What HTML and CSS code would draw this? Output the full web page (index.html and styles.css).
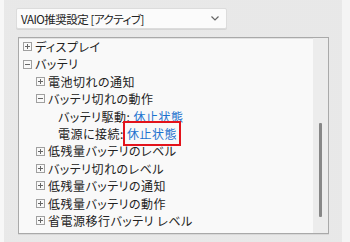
FILE: index.html
```html
<!DOCTYPE html>
<html lang="ja">
<head>
    <meta charset="UTF-8">
    <meta name="viewport" content="width=device-width, initial-scale=1.0">
    <title>電源オプション</title>
    <link rel="stylesheet" href="styles.css">
</head>
<body>
    <div class="edge-left"></div>
    <div class="panel">
        <!-- プラン選択 -->
        <div class="plan-select">
            <span class="plan-name">VAIO推奨設定 [アクティブ]</span>
            <svg class="chevron" width="8" height="5" viewBox="0 0 8 5"><path d="M0.5 0.5 L4 4 L7.5 0.5" fill="none" stroke="#666" stroke-width="1.2"/></svg>
        </div>

        <!-- 設定ツリー -->
        <div class="tree-box">
            <div class="tree">
                <div class="row level-1"><span class="toggle"></span>ディスプレイ</div>
                <div class="row level-1"><span class="toggle open"></span>バッテリ</div>
                <div class="row level-2"><span class="toggle"></span>電池切れの通知</div>
                <div class="row level-2"><span class="toggle open"></span>バッテリ切れの動作</div>
                <div class="row level-3">バッテリ駆動: <a class="value">休止状態</a></div>
                <div class="row level-3">電源に接続: <a class="value marked">休止状態</a></div>
                <div class="row level-2"><span class="toggle"></span>低残量バッテリのレベル</div>
                <div class="row level-2"><span class="toggle"></span>バッテリ切れのレベル</div>
                <div class="row level-2"><span class="toggle"></span>低残量バッテリの通知</div>
                <div class="row level-2"><span class="toggle"></span>低残量バッテリの動作</div>
                <div class="row level-2"><span class="toggle"></span>省電源移行バッテリ レベル</div>
            </div>
            <div class="scrollbar"><div class="thumb"></div></div>
        </div>
    </div>
    <div class="edge-right"></div>
</body>
</html>
```

FILE: styles.css
```css
html, body {
    height: 100%;
}
body {
    margin: 0;
    display: flex;
    font-family: "Noto Sans CJK JP", sans-serif;
    font-size: 12px;
    font-feature-settings: "palt" 1;
    color: #222;
    background: #f6f6f6;
}
.edge-left {
    width: 4px;
    background: #f7f7f7;
}
.edge-right {
    width: 8px;
    background: #f4f4f4;
}
/* 点模様の背景 */
.panel {
    flex: 1;
    padding: 8px 0 0 12px;
    background-color: #f3f3f3;
    background-image: radial-gradient(#e2e2e2 0.6px, transparent 0.9px);
    background-size: 2px 2px;
}
.plan-select {
    width: 211px;
    height: 21px;
    box-sizing: border-box;
    display: flex;
    align-items: center;
    justify-content: space-between;
    padding: 0 7px 0 4px;
    background: #fbfbfb;
    border: 1px solid #dcdcdc;
    box-shadow: 0 1px 0 #d6d6d6;
    border-radius: 2px;
}
.plan-name {
    font-size: 11.5px;
    letter-spacing: -0.5px;
}
.tree-box {
    width: 311px;
    height: 197px;
    box-sizing: border-box;
    margin: 8px 0 0 2px;
    display: flex;
    background: #f9f9f9;
    border: 1px solid #a9a9a9;
    box-shadow: 0 1px 0 #d8d8d8, inset 0 1px 0 #e2e2e2;
}
.tree {
    flex: 1;
    letter-spacing: 0.5px;
}
.row {
    height: 17.4px;
    line-height: 17.4px;
    display: flex;
    align-items: center;
    white-space: pre;
}
.level-1 {
    padding-left: 4px;
}
.level-2 {
    padding-left: 17px;
}
.level-3 {
    padding-left: 39px;
}
/* ツリーの開閉ボタン */
.toggle {
    width: 9px;
    height: 9px;
    box-sizing: border-box;
    margin-right: 3px;
    border: 1px solid #a0a0a0;
    background:
        linear-gradient(#666, #666) center / 5px 1px no-repeat,
        linear-gradient(#666, #666) center / 1px 5px no-repeat;
}
.toggle.open {
    background: linear-gradient(#666, #666) center / 5px 1px no-repeat;
}
.value {
    color: #1c72cf;
    cursor: pointer;
}
.marked {
    outline: 2px solid #e3131b;
    outline-offset: 2px;
}
.scrollbar {
    width: 15px;
    background: #ececec;
    display: flex;
    justify-content: center;
}
.thumb {
    width: 3px;
    height: 94px;
    margin-top: 85px;
    background: #878787;
    border-radius: 1px;
}
```
